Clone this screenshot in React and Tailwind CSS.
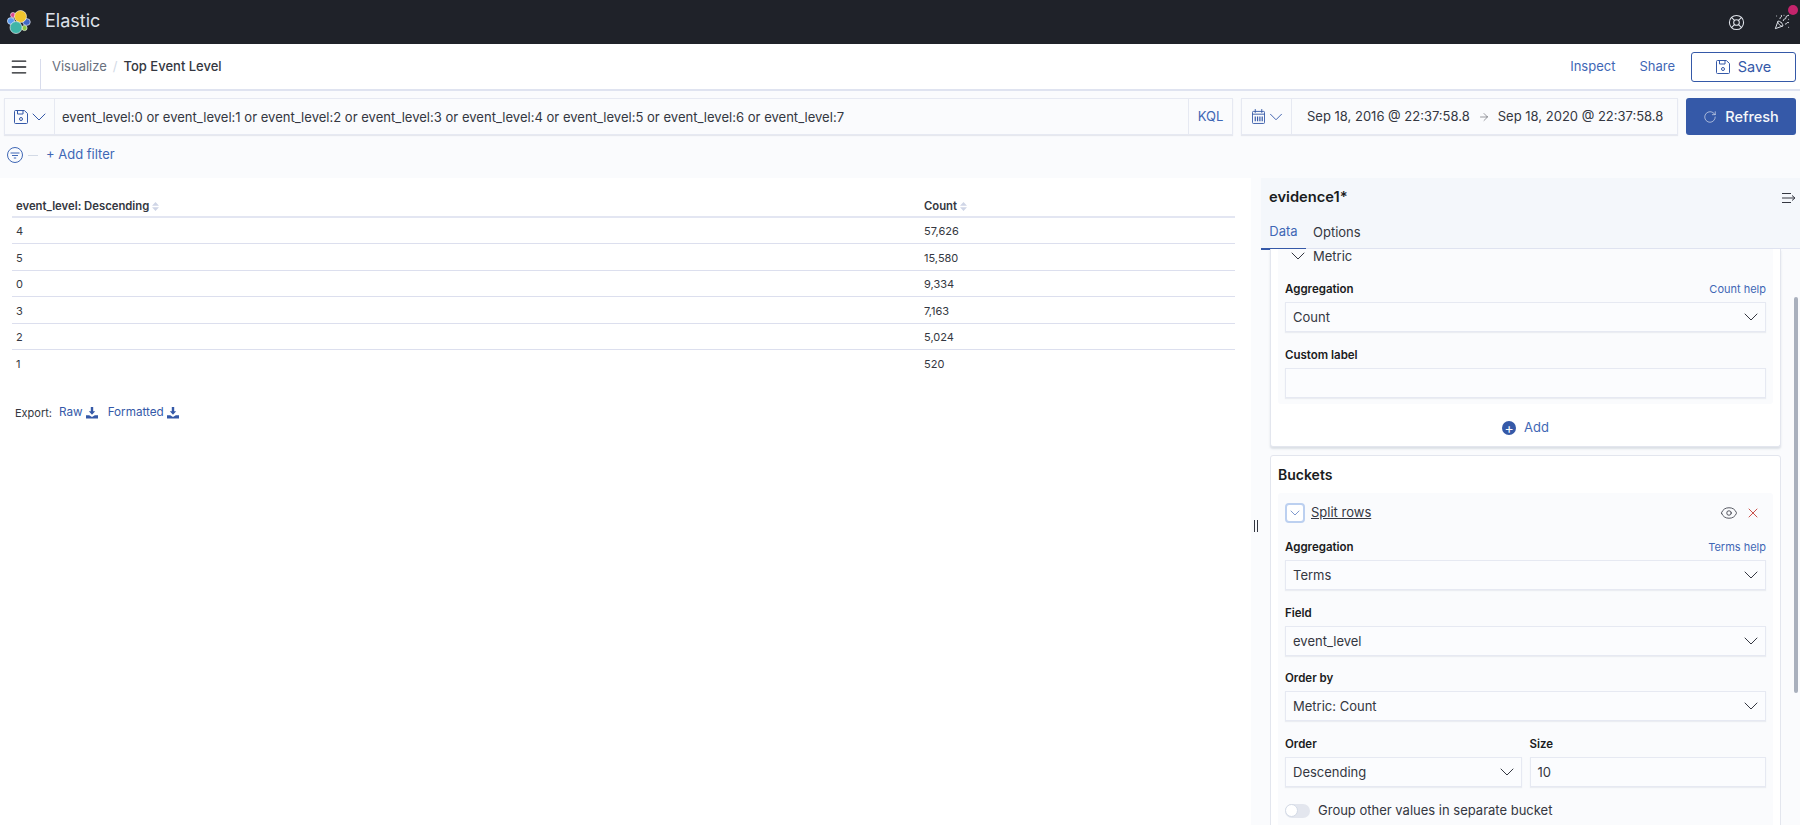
import { ChevronDown, Eye, X, Menu, RotateCw, ArrowRight, LifeBuoy, PartyPopper } from 'lucide-react'

const ROWS = [
  ['4', '57,626'],
  ['5', '15,580'],
  ['0', '9,334'],
  ['3', '7,163'],
  ['2', '5,024'],
  ['1', '520']
]

function Logo() {
  return (
    <svg width="24" height="24" viewBox="0 0 24 24" stroke="#fff" strokeWidth="0.6">
      <ellipse cx="4" cy="11" rx="3.6" ry="3.4" fill="#5b9cf0" />
      <circle cx="6" cy="5" r="2.5" fill="#d9478f" />
      <ellipse cx="19.5" cy="12" rx="3.8" ry="3.4" fill="#3f67c5" />
      <circle cx="17.5" cy="18" r="2.6" fill="#8cc63f" />
      <circle cx="13.5" cy="6.5" r="6" fill="#f0c52e" />
      <circle cx="9" cy="17.5" r="6" fill="#3fb5a8" />
    </svg>
  )
}

function SaveIcon({ className = '' }) {
  return (
    <svg width="14" height="14" viewBox="0 0 14 14" fill="none" stroke="currentColor" strokeWidth="1" className={className}>
      <path d="M.5 1.5a1 1 0 0 1 1-1h8.8l3.2 3v9a1 1 0 0 1-1 1h-11a1 1 0 0 1-1-1z" />
      <path d="M3.5.5v3.5h5.5V.5" />
      <circle cx="7" cy="9" r="1.5" />
    </svg>
  )
}

function CalendarIcon() {
  return (
    <svg width="13" height="15" viewBox="0 0 14 16" fill="none" stroke="currentColor" strokeWidth="1" className="shrink-0">
      <rect x=".5" y="2.5" width="13" height="13" rx="1" />
      <path d="M.5 5.5h13M3.5 0v4M10.5 0v4" />
      <path d="M3.5 8v5M6 8v5M8.5 8v5M11 8v5" strokeWidth="1.3" />
    </svg>
  )
}

function SortIcon() {
  return (
    <svg width="7" height="9" viewBox="0 0 7 9" className="ml-[3px]">
      <path d="M3.5 0 7 3.7H0z M3.5 9 0 5.3h7z" fill="#cfd5e6" />
    </svg>
  )
}

function DownloadIcon() {
  return (
    <svg width="12" height="12" viewBox="0 0 12 12" className="ml-[3px]" fill="#3559a8">
      <path d="M4.8 0h2.4v4.2h2L6 7.8 2.8 4.2h2z" />
      <path d="M0 8.2h3.2L6 10l2.8-1.8H12V11.5H0z" />
    </svg>
  )
}

function FilterIcon() {
  return (
    <svg width="16" height="16" viewBox="0 0 16 16" fill="none" stroke="#3f67b5" strokeWidth="1">
      <circle cx="8" cy="8" r="7.5" />
      <path d="M3.5 6h9M5 8.5h6M6.8 11h2.4" />
    </svg>
  )
}

function CollapseIcon() {
  return (
    <svg width="14" height="12" viewBox="0 0 14 12" fill="none" stroke="#343741" strokeWidth="1">
      <path d="M0 1.5h9M0 6h12M0 10.5h9M10 3.5 13 6l-3 2.5" />
    </svg>
  )
}

function FieldLabel({ children, help }) {
  return (
    <div className="flex justify-between items-center h-[15px] mb-[5px]">
      <span className="text-[11.5px] font-semibold text-[#1a1c21]">{children}</span>
      {help && <span className="text-[11px] text-[#3f67b5]">{help}</span>}
    </div>
  )
}

function SelectBox({ value, plain }) {
  return (
    <div className="flex items-center justify-between h-[30px] border border-[#e6e9f2] bg-[#fbfcfe] pl-[7px] pr-[2px] text-[13px] text-[#343741] shadow-[0_1px_1px_rgba(152,162,179,0.15)]">
      <span className="pt-[1px]">{value}</span>
      {!plain && <ChevronDown size={24} strokeWidth={1} className="text-[#343741]" />}
    </div>
  )
}

function TopHeader() {
  return (
    <div className="flex items-center h-[44px] bg-[#1f2229] pl-[7px] pr-[10px]">
      <Logo />
      <span className="ml-[14px] pb-[2px] text-lg text-[#dfe3ea]">Elastic</span>
      <div className="flex-1" />
      <LifeBuoy size={17} strokeWidth={1.5} className="text-[#dfe3ea]" />
      <div className="relative ml-[29px]">
        <PartyPopper size={16} strokeWidth={1.5} className="text-[#dfe3ea]" />
        <span className="absolute -top-[9px] -right-[8px] w-[10px] h-[10px] rounded-full bg-[#c4246c]" />
      </div>
    </div>
  )
}

function NavBar() {
  return (
    <div className="flex items-center h-[47px] bg-white border-b-2 border-[#dfe3f0] pr-[4px]">
      <div className="flex items-center self-stretch">
        <Menu size={20} strokeWidth={1.6} className="ml-[9px] text-[#1a1c21]" />
        <div className="ml-[11px] mt-[15px] self-stretch w-px bg-[#d8dcec]" />
      </div>
      <span className="ml-[11px] text-[13px] text-[#69707d]">Visualize</span>
      <span className="mx-[6px] text-[13px] text-[#d3dae6]">/</span>
      <span className="text-[13px] font-medium text-[#343741]">Top Event Level</span>
      <div className="flex-1" />
      <span className="text-[13px] text-[#3f67b5]">Inspect</span>
      <span className="ml-[24px] text-[13px] text-[#3f67b5]">Share</span>
      <div className="ml-[16px] flex items-center justify-center w-[105px] h-[30px] rounded-[3px] border border-[#3559a8] text-[#3559a8] text-[14.5px]">
        <SaveIcon />
        <span className="ml-[8px]">Save</span>
      </div>
    </div>
  )
}

function QueryBar() {
  return (
    <div className="bg-[#fafbfd] h-[87px] pl-[4px] pr-[4px] pt-[7px]">
      <div className="flex items-stretch h-[37px]">
        <div className="flex flex-1 items-stretch bg-[#fafbfd] border border-[#e6e9f2] shadow-[0_1px_1px_rgba(152,162,179,0.2)] text-[13.05px]">
          <div className="flex items-center w-[50px] pl-[9px] border-r border-[#e6e9f2] text-[#3559a8]">
            <SaveIcon className="shrink-0" />
            <ChevronDown size={24} strokeWidth={1} className="shrink-0 -ml-[1px]" />
          </div>
          <div className="flex-1 flex items-center pl-[7px] pt-[2px] text-[#343741]">
            event_level:0 or event_level:1 or event_level:2 or event_level:3 or event_level:4 or event_level:5 or event_level:6 or event_level:7
          </div>
          <div className="flex items-center justify-center w-[44px] pt-[1px] border-l border-[#e6e9f2] text-[#3f67b5]">KQL</div>
        </div>
        <div className="ml-[8px] flex items-stretch w-[437px] bg-[#fafbfd] border border-[#e6e9f2] shadow-[0_1px_1px_rgba(152,162,179,0.2)] text-[13px] text-[#343741]">
          <div className="flex items-center w-[50px] pl-[10px] border-r border-[#e6e9f2] text-[#3559a8]">
            <CalendarIcon />
            <ChevronDown size={22} strokeWidth={1} className="shrink-0" />
          </div>
          <div className="flex items-center pl-[15px] pt-[1px] whitespace-nowrap">
            <span>Sep 18, 2016 @ 22:37:58.8</span>
            <ArrowRight size={12} strokeWidth={1} className="mx-[8px] text-[#343741]" />
            <span>Sep 18, 2020 @ 22:37:58.8</span>
          </div>
        </div>
        <div className="ml-[8px] flex items-center justify-center w-[110px] rounded-[3px] bg-[#3559a8] text-[#f5f7fa] text-[14.5px] font-medium">
          <RotateCw size={14} strokeWidth={1} />
          <span className="ml-[8px]">Refresh</span>
        </div>
      </div>
      <div className="flex items-center h-[18px] mt-[11px] pl-[3px] text-[13px] text-[#3f67b5]">
        <FilterIcon />
        <span className="ml-[5px] w-[10px] h-px bg-[#d3dae6]" />
        <span className="ml-[8px]">+ Add filter</span>
      </div>
    </div>
  )
}

function DataTable() {
  return (
    <div className="flex-1 pl-[12px] pr-[16px] pt-[17px] text-[11px] text-[#343741]">
      <div className="grid grid-cols-[912px_1fr] h-[23px] pt-[1px] border-b-2 border-[#e3e6f2] text-[11.3px] font-semibold text-[#343741] items-center pl-[4px]">
        <div className="flex items-center">event_level: Descending<SortIcon /></div>
        <div className="flex items-center -ml-[4px]">Count<SortIcon /></div>
      </div>
      {ROWS.map((r, i) => (
        <div key={r[0]} className={`grid grid-cols-[912px_1fr] h-[26.4px] pt-[2px] items-center pl-[4px] ${i < ROWS.length - 1 ? 'border-b border-[#dcdfee]' : ''}`}>
          <div>{r[0]}</div>
          <div className="-ml-[4px]">{r[1]}</div>
        </div>
      ))}
      <div className="flex items-center mt-[28px] pl-[3px] text-[#343741]">
        <span>Export:</span>
        <span className="ml-[7px] flex items-center text-[11.7px] text-[#3559a8]">Raw<DownloadIcon /></span>
        <span className="ml-[10px] flex items-center text-[11.7px] text-[#3559a8]">Formatted<DownloadIcon /></span>
      </div>
    </div>
  )
}

function Sidebar() {
  return (
    <div className="relative flex flex-col w-[549px] bg-[#fafbfd] pl-[10px]">
      <div className="absolute left-[3px] top-[342px] w-[4px] h-[12px] border-x border-[#343741]" />
      <div className="bg-[#f4f7fb] h-[71px] border-b border-[#dfe3f0] relative">
        <div className="flex items-center justify-between h-[36px] pt-[3px] pl-[8px] pr-[4px]">
          <span className="text-[14.7px] font-semibold text-[#1a1c21]">evidence1*</span>
          <CollapseIcon />
        </div>
        <div className="flex h-[35px] text-[13px]">
          <div className="flex items-center justify-center w-[45px] h-[36px] pt-[2px] border-b-2 border-[#3559a8] text-[#3f67b5]">Data</div>
          <div className="flex items-center h-[35px] pt-[2px] ml-[7px] text-[#343741]">Options</div>
        </div>
      </div>
      <div className="relative flex-1 overflow-hidden pl-[9px]">
        <div className="absolute left-[533px] top-[48px] w-[4px] h-[396px] rounded-[2px] bg-[#a9b0bd]" />
        <div className="w-[511px] h-[198px] bg-white border-x border-b border-[#e3e6ee] rounded-b-[3px] shadow-[0_2px_2px_rgba(152,162,179,0.3)] px-[7px]">
          <div className="h-[155px] bg-[#fafbfd] rounded-b-[3px] px-[7px]">
            <div className="flex items-center h-[14px] pl-[1px] text-[13px] text-[#343741]">
              <ChevronDown size={24} strokeWidth={1} className="shrink-0" />
              <span className="ml-[3px] leading-[13px]">Metric</span>
            </div>
            <div className="mt-[19px]">
              <FieldLabel help="Count help">Aggregation</FieldLabel>
              <SelectBox value="Count" />
            </div>
            <div className="mt-[16px]">
              <FieldLabel>Custom label</FieldLabel>
              <SelectBox value="" plain />
            </div>
          </div>
          <div className="flex items-center justify-center h-[46px] pt-[1px] text-[13px] text-[#3f67b5]">
            <span className="flex items-center justify-center w-[14px] h-[14px] rounded-full bg-[#3559a8] text-white text-sm leading-none">+</span>
            <span className="ml-[8px]">Add</span>
          </div>
        </div>
        <div className="mt-[8px] w-[511px] h-[400px] bg-white border border-[#e3e6ee] rounded-[3px] px-[7px]">
          <div className="h-[37px] flex items-center text-sm font-semibold text-[#1a1c21]">Buckets</div>
          <div className="bg-[#fafbfd] rounded-[3px] px-[7px] h-[340px]">
            <div className="flex items-center h-[39px]">
              <span className="flex items-center justify-center w-[20px] h-[20px] rounded-[4px] border-2 border-[#bcd0f0] bg-white text-[#3f67b5]">
                <ChevronDown size={18} strokeWidth={1} />
              </span>
              <span className="ml-[6px] text-[13px] text-[#343741] underline">Split rows</span>
              <div className="flex-1" />
              <Eye size={18} strokeWidth={1.1} className="text-[#343741]" />
              <X size={16} strokeWidth={1.2} className="ml-[7px] mr-[5px] text-[#bd271e]" />
            </div>
            <div className="mt-[8px]">
              <FieldLabel help="Terms help">Aggregation</FieldLabel>
              <SelectBox value="Terms" />
            </div>
            <div className="mt-[16px]">
              <FieldLabel>Field</FieldLabel>
              <SelectBox value="event_level" />
            </div>
            <div className="mt-[15px]">
              <FieldLabel>Order by</FieldLabel>
              <SelectBox value="Metric: Count" />
            </div>
            <div className="mt-[16px] grid grid-cols-2 gap-[8px]">
              <div>
                <FieldLabel>Order</FieldLabel>
                <SelectBox value="Descending" />
              </div>
              <div>
                <FieldLabel>Size</FieldLabel>
                <SelectBox value="10" plain />
              </div>
            </div>
            <div className="flex items-center mt-[14px] text-[13px] text-[#343741]">
              <span className="flex items-center w-[25px] h-[14px] rounded-full bg-[#e3e6ee]">
                <span className="w-[13px] h-[13px] rounded-full bg-white border border-[#d3dae6]" />
              </span>
              <span className="ml-[8px]">Group other values in separate bucket</span>
            </div>
          </div>
        </div>
      </div>
    </div>
  )
}

export default function App() {
  return (
    <div className="flex flex-col h-[825px] overflow-hidden bg-white font-['Inter',sans-serif]">
      <TopHeader />
      <NavBar />
      <QueryBar />
      <div className="flex flex-1 min-h-0">
        <DataTable />
        <Sidebar />
      </div>
    </div>
  )
}
